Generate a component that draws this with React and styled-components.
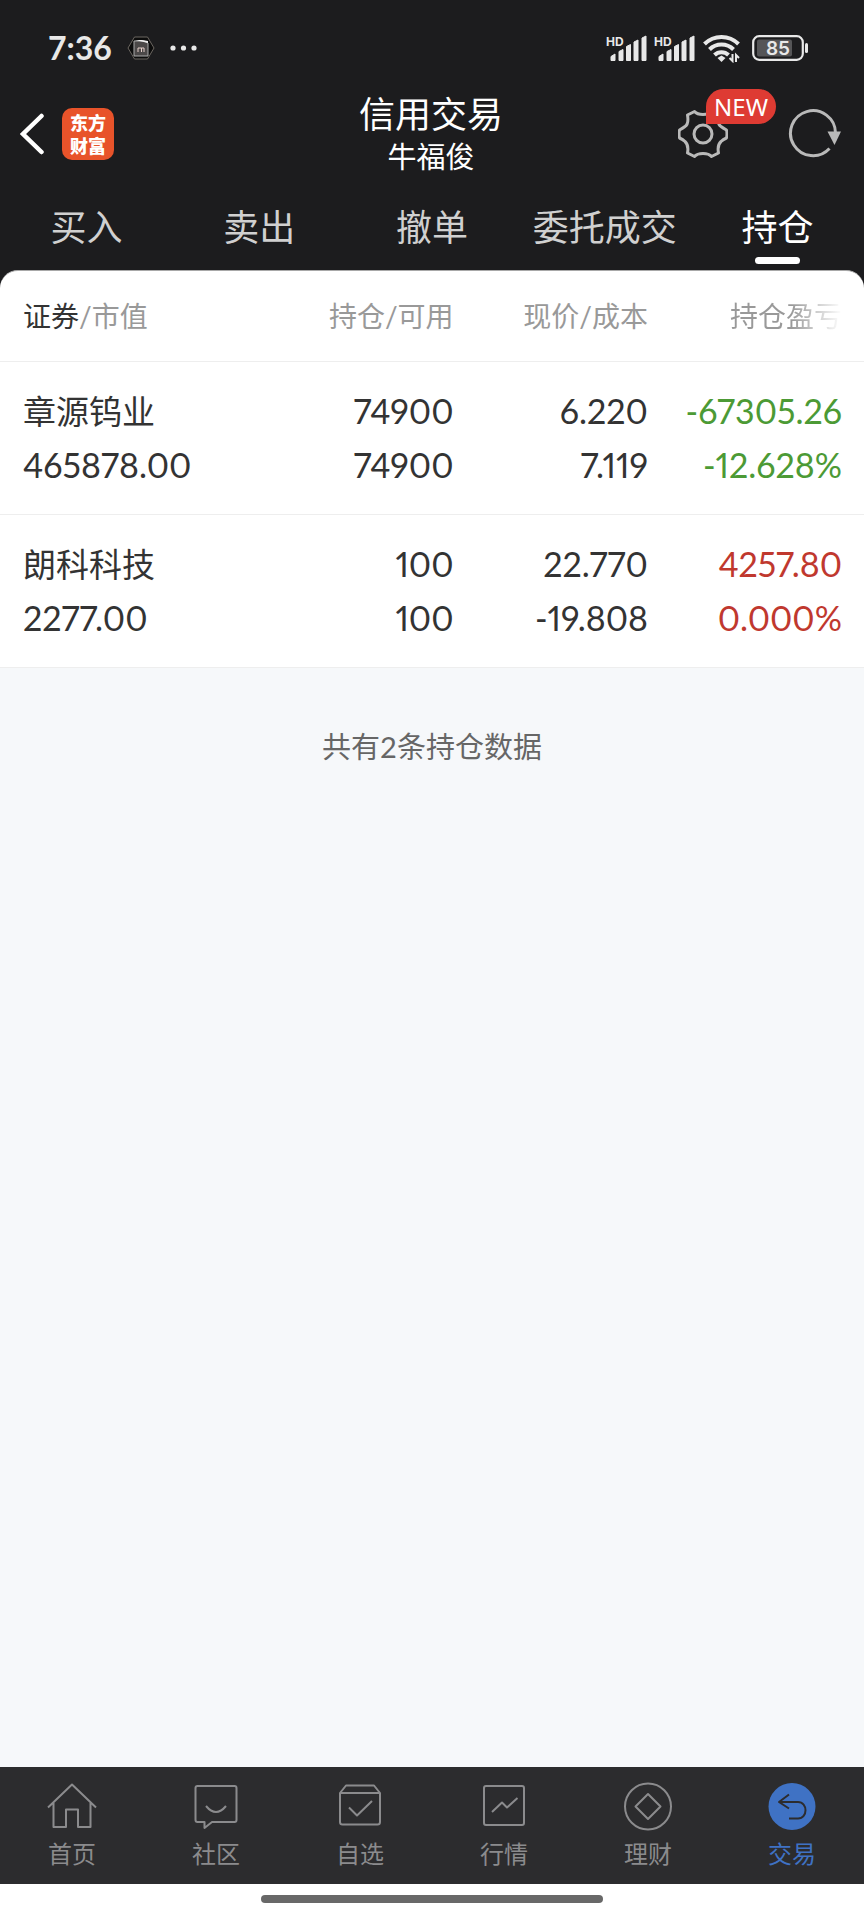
import * as React from 'react'
import styled, { createGlobalStyle } from 'styled-components'

const GlobalStyle = createGlobalStyle`
  * {
    box-sizing: border-box;
  }
  body {
    margin: 0;
    background: #fff;
    font-family: Lato, 'Noto Sans CJK SC', sans-serif;
  }
  button {
    padding: 0;
    border: none;
    background: none;
    color: inherit;
    font: inherit;
    cursor: pointer;
  }
  svg {
    display: block;
  }
`

const Page = styled.div`
  min-height: 100vh;
  display: flex;
  flex-direction: column;
  background: #f6f8fa;
`

const Top = styled.header`
  background: #1c1c1e;
  color: #fff;
`

const StatusBar = styled.div`
  display: flex;
  align-items: center;
  justify-content: space-between;
  height: 88px;
  padding: 8px 54px 0 48px;
  color: #e8e8e8;
`

const StatusGroup = styled.div`
  display: flex;
  align-items: center;
  gap: ${({ $gap }) => $gap}px;
`

const Clock = styled.time`
  font-size: 32px;
  font-weight: 700;
  line-height: 40px;
`

const TitleBar = styled.div`
  display: grid;
  grid-template-columns: 1fr auto 1fr;
  align-items: center;
  height: 92px;
  padding: 0 22px 0 20px;
`

const Side = styled.div`
  display: flex;
  align-items: center;
  justify-content: ${({ $end }) => ($end ? 'flex-end' : 'flex-start')};
  gap: ${({ $end }) => ($end ? 60 : 16)}px;
`

const Logo = styled.span`
  display: flex;
  flex-direction: column;
  justify-content: center;
  gap: 4px;
  width: 52px;
  height: 52px;
  border-radius: 10px;
  background: #e8532a;
  color: #fff;
  font-family: 'Noto Sans CJK SC', sans-serif;
  font-size: 18px;
  font-weight: 900;
  line-height: 19px;
  text-align: center;
`

const Title = styled.h1`
  margin: 0;
  font-size: 36px;
  font-weight: 400;
  line-height: 48px;
  text-align: center;
`

const Account = styled.p`
  margin: 0;
  padding-bottom: 2px;
  font-size: 29px;
  line-height: 38px;
  text-align: center;
`

const IconButton = styled.button`
  position: relative;
  color: #b9b9b9;
`

const NewBadge = styled.span`
  position: absolute;
  left: 28px;
  bottom: 35px;
  width: 70px;
  border-radius: 18px 18px 18px 0;
  background: #de3b33;
  color: #fff;
  font-family: 'Noto Sans', sans-serif;
  font-size: 24px;
  line-height: 35px;
  text-align: center;
`

const Tabs = styled.nav`
  display: grid;
  grid-template-columns: repeat(5, 1fr);
  height: 90px;
`

const Tab = styled.a`
  display: flex;
  flex-direction: column;
  align-items: center;
  padding-top: 20px;
  color: ${({ $active }) => ($active ? '#fff' : '#d0d0d0')};
  font-size: 36px;
  line-height: 54px;
  text-decoration: none;
  white-space: nowrap;
  &::after {
    content: '';
    width: 45px;
    height: 7px;
    margin-top: 3px;
    border-radius: 4px;
    background: ${({ $active }) => ($active ? '#fff' : 'transparent')};
  }
`

const Main = styled.main`
  flex: 1;
  background: linear-gradient(#1c1c1e 40px, transparent 40px);
`

const Holdings = styled.table`
  width: 100%;
  table-layout: fixed;
  border-spacing: 0;
  border-top: 1px solid #a8a8a8;
  border-radius: 18px 18px 0 0;
  background: #fff;
`

const HeadCell = styled.th`
  width: ${({ $width }) => $width};
  height: 91px;
  padding: ${({ $first }) => ($first ? '0 0 0 23px' : '0')};
  border-bottom: 1px solid #eee;
  color: #999;
  font-size: 28px;
  font-weight: 400;
  line-height: 40px;
  text-align: ${({ $first }) => ($first ? 'left' : 'right')};
  white-space: nowrap;
  &:last-child {
    padding-right: 22px;
  }
`

const Strong = styled.span`
  color: #333;
`

const FadeText = styled.span`
  background: linear-gradient(90deg, #999 55%, #c8c8c8 75%, #fff 100%);
  background-clip: text;
  color: transparent;
`

const colors = { up: '#c0382e', down: '#4c9a35' }

const Cell = styled.td`
  padding: 22px 0 22px;
  border-bottom: 1px solid #eee;
  color: ${({ $trend }) => colors[$trend] || '#333'};
  font-size: 34px;
  font-variant-numeric: proportional-nums;
  line-height: 54px;
  text-align: right;
  &:first-child {
    padding-left: 23px;
    text-align: left;
  }
  &:last-child {
    padding-right: 22px;
  }
`

const Line = styled.div`
  height: 54px;
  white-space: nowrap;
`

const StockName = styled(Line)`
  font-size: 33px;
`

const Summary = styled.p`
  margin: 0;
  padding-top: 59px;
  color: #666;
  font-size: 29px;
  line-height: 40px;
  text-align: center;
`

const BottomNav = styled.nav`
  display: grid;
  grid-template-columns: repeat(6, 1fr);
  height: 117px;
  background: #2c2c2e;
`

const NavItem = styled.a`
  display: flex;
  flex-direction: column;
  align-items: center;
  padding-top: 15px;
  color: ${({ $active }) => ($active ? '#3f72c4' : '#8b8b8d')};
  font-size: 24px;
  line-height: 36px;
  text-decoration: none;
  svg {
    margin-bottom: 4px;
  }
`

const HomeBar = styled.div`
  display: flex;
  justify-content: center;
  height: 36px;
  padding-top: 11px;
  background: #fff;
  &::after {
    content: '';
    width: 342px;
    height: 8px;
    border-radius: 4px;
    background: #686868;
  }
`

const Signal = () => (
  <svg width="42" height="28" viewBox="0 0 42 28" fill="currentColor">
    <text x="0" y="12" fontFamily="Inter, sans-serif" fontSize="12" fontWeight="700">
      HD
    </text>
    <path d="M5 22.500 9 20v6.500H5zM13 17.500l4-2v11h-4zM20.500 12.500l4-2v16h-4zM28 8l4-2v20.500h-4zM36 4l4-2v24.500h-4z" stroke="currentColor" strokeLinejoin="round" />
  </svg>
)

const Wifi = () => (
  <svg width="44" height="30" viewBox="-1 0 44 30" fill="none" stroke="currentColor" strokeWidth="4">
    <path d="M1.500 11a24 24 0 0 1 34 0M6.500 16.500a17 17 0 0 1 24 0M11.500 22a10 10 0 0 1 14 0" />
    <path d="m14.500 25 4-2.500 4 2.500-4 4z" fill="currentColor" stroke="none" />
    <path d="M29.500 21v7l-3-3M33 29v-7l3 3" strokeWidth="2" />
  </svg>
)

const Battery = () => (
  <svg width="58" height="26" viewBox="0 0 58 26">
    <rect x="1.200" y="1.200" width="49.600" height="23.600" rx="6" fill="none" stroke="currentColor" strokeWidth="2.200" />
    <rect x="5" y="4.500" width="35" height="17" rx="2" fill="#555557" />
    <path d="M54.500 9.500v7" stroke="currentColor" strokeWidth="3" strokeLinecap="round" />
    <text x="26" y="20" fill="currentColor" fontFamily="Inter, sans-serif" fontSize="19" fontWeight="600" textAnchor="middle">
      85
    </text>
  </svg>
)

const Notice = () => (
  <svg width="28" height="26" viewBox="0 0 28 26">
    <path d="M7.500 2h13L27 13l-6.500 11h-13L1 13z" fill="#0c0c0c" stroke="#6b6660" />
    <path d="M7 6h10l4 2v13H7z" fill="#4b4848" stroke="#aaa" />
    <path d="m8 5 13 3v-2l-6-1z" fill="#eee" />
    <path d="M11 17v-4h3.500v4M14.500 13H17v4" fill="none" stroke="#e5cfc9" />
  </svg>
)

const Dots = () => (
  <svg width="28" height="6" viewBox="0 0 28 6" fill="currentColor">
    <circle cx="3" cy="3" r="2.600" />
    <circle cx="13.500" cy="3" r="2.600" />
    <circle cx="24" cy="3" r="2.600" />
  </svg>
)

const Back = () => (
  <svg width="26" height="42" viewBox="0 0 26 42" fill="none" stroke="#fff" strokeWidth="4.500" strokeLinecap="round">
    <path d="M21.500 3 3 21l18.500 18" strokeLinejoin="miter" />
  </svg>
)

const Gear = () => (
  <svg width="50" height="50" viewBox="0 0 50 50" fill="none" stroke="currentColor" strokeWidth="3" strokeLinejoin="round">
    <path d="M16.500 2.500 9.500 6Q11 15 7 17.500 5 19 1.500 21 .5 25 1.500 29 5 30.500 7 32.500 11 36 9.500 44l7 3.500Q19 44.500 25 44.500t8.500 3l7-3.500Q39 36 43 32.500 45 30.500 48.500 29q1-4 0-8Q45 19 43 17.500 39 15 40.500 6l-7-3.500Q31 5.500 25 5.500t-8.500-3z" />
    <circle cx="25" cy="25" r="9" />
  </svg>
)

const Refresh = () => (
  <svg width="54" height="50" viewBox="0 0 54 50" fill="none" stroke="currentColor" strokeWidth="3">
    <path d="M41.500 39.500A22.500 22.500 0 1 1 47.500 24" />
    <path d="M39.500 22.500H53L46.500 36z" fill="currentColor" stroke="none" />
  </svg>
)

const navIcons = {
  home: <path d="M1 25.500 25 2.500l24 23M6.500 21v24H19V27.500h12V45h12.500V21" />,
  community: (
    <path d="M6.500 4h37q2 0 2 2v32q0 2-2 2H21l-7.500 6v-6h-7q-2 0-2-2V6q0-2 2-2zM15 24q10 12 20 0" />
  ),
  watch: (
    <path d="M5 11 11 3.500h28L45 11v29q0 2.500-2.500 2.500h-35Q5 42.500 5 40zM5 11h40M14 25.500l8 8L37 19" />
  ),
  market: <path d="M7 4h36q2 0 2 2v35q0 2-2 2H7q-2 0-2-2V6q0-2 2-2zM13 30l10-9.500 5 5L38.500 16" />,
  wealth: (
    <>
      <circle cx="25" cy="24.500" r="23" />
      <path d="m25 12 12.500 12.500L25 37 12.500 24.500z" />
    </>
  ),
  trade: (
    <>
      <circle cx="25" cy="24.500" r="23.500" fill="currentColor" stroke="none" />
      <path d="M22 12.500 12 20l10 6.500M12 20h19c10 0 10 16.500 0 16.500h-9" stroke="#2c2c2e" />
    </>
  ),
}

const tabs = ['买入', '卖出', '撤单', '委托成交', '持仓']

const holdings = [
  {
    name: '章源钨业',
    value: '465878.00',
    amount: ['74900', '74900'],
    price: ['6.220', '7.119'],
    profit: ['-67305.26', '-12.628%'],
    trend: 'down',
  },
  {
    name: '朗科科技',
    value: '2277.00',
    amount: ['100', '100'],
    price: ['22.770', '-19.808'],
    profit: ['4257.80', '0.000%'],
    trend: 'up',
  },
]

const navItems = [
  ['home', '首页'],
  ['community', '社区'],
  ['watch', '自选'],
  ['market', '行情'],
  ['wealth', '理财'],
  ['trade', '交易'],
]

function Pair({ values, trend }) {
  return (
    <Cell $trend={trend}>
      <Line>{values[0]}</Line>
      <Line>{values[1]}</Line>
    </Cell>
  )
}

export default function App() {
  return (
    <Page>
      <GlobalStyle />
      <Top>
        <StatusBar>
          <StatusGroup $gap={15}>
            <Clock>7:36</Clock>
            <Notice />
            <Dots />
          </StatusGroup>
          <StatusGroup $gap={6}>
            <Signal />
            <Signal />
            <Wifi />
            <Battery />
          </StatusGroup>
        </StatusBar>
        <TitleBar>
          <Side>
            <IconButton type="button" aria-label="返回">
              <Back />
            </IconButton>
            <Logo>
              <span>东方</span>
              <span>财富</span>
            </Logo>
          </Side>
          <div>
            <Title>信用交易</Title>
            <Account>牛福俊</Account>
          </div>
          <Side $end>
            <IconButton type="button" aria-label="设置">
              <Gear />
              <NewBadge>NEW</NewBadge>
            </IconButton>
            <IconButton type="button" aria-label="刷新">
              <Refresh />
            </IconButton>
          </Side>
        </TitleBar>
        <Tabs>
          {tabs.map((tab) => (
            <Tab key={tab} href="#" $active={tab === '持仓'}>
              {tab}
            </Tab>
          ))}
        </Tabs>
      </Top>
      <Main>
        <Holdings>
          <thead>
            <tr>
              <HeadCell $width="27.5%" $first>
                <Strong>证券</Strong>/市值
              </HeadCell>
              <HeadCell $width="25%">持仓/可用</HeadCell>
              <HeadCell $width="22.5%">现价/成本</HeadCell>
              <HeadCell $width="25%">
                <FadeText>持仓盈亏</FadeText>
              </HeadCell>
            </tr>
          </thead>
          <tbody>
            {holdings.map((item) => (
              <tr key={item.name}>
                <Cell>
                  <StockName>{item.name}</StockName>
                  <Line>{item.value}</Line>
                </Cell>
                <Pair values={item.amount} />
                <Pair values={item.price} />
                <Pair values={item.profit} trend={item.trend} />
              </tr>
            ))}
          </tbody>
        </Holdings>
        <Summary>共有2条持仓数据</Summary>
      </Main>
      <BottomNav>
        {navItems.map(([icon, label]) => (
          <NavItem key={icon} href="#" $active={icon === 'trade'}>
            <svg width="50" height="50" viewBox="0 0 50 50" fill="none" stroke="currentColor" strokeWidth="2" strokeLinejoin="round">
              {navIcons[icon]}
            </svg>
            {label}
          </NavItem>
        ))}
      </BottomNav>
      <HomeBar />
    </Page>
  )
}
